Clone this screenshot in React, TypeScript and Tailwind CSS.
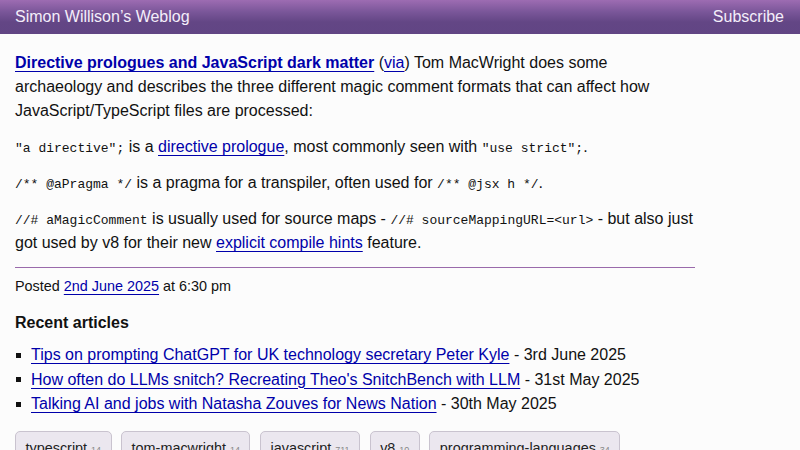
import React from "react";

const mono = "font-['Liberation_Mono',monospace] text-[13px] leading-[1]";
const link = "text-[#0000aa] underline decoration-1 underline-offset-[3px]";

function Code({ children }: { children: React.ReactNode }) {
  return <code className={mono}>{children}</code>;
}

const tags: [string, number][] = [
  ["typescript", 14],
  ["tom-macwright", 14],
  ["javascript", 711],
  ["v8", 10],
  ["programming-languages", 34],
];

export default function App() {
  return (
    <div className="min-h-[450px] w-[800px] overflow-hidden bg-[#fcfcfc] font-['Liberation_Sans',Arial,sans-serif] text-[#111]">
      <header className="flex h-[34px] items-center justify-between bg-[linear-gradient(to_bottom,#9d6cb2_0%,#7a5699_35%,#634685_65%,#614584_100%)] px-[15px] text-[16px] text-[#f4eefa]">
        <span>Simon Willison’s Weblog</span>
        <span className="pr-px">Subscribe</span>
      </header>
      <main className="w-[710px] px-[15px] pt-[17px] text-[16px] leading-[24px]">
        <p className="mb-[12px]">
          <a className={`${link} font-bold`}>Directive prologues and JavaScript dark matter</a> (
          <a className={link}>via</a>) Tom MacWright does some archaeology and describes the three
          different magic comment formats that can affect how JavaScript/TypeScript files are
          processed:
        </p>
        <p className="mb-[12px]">
          <Code>"a directive";</Code> is a <a className={link}>directive prologue</a>, most commonly
          seen with <Code>"use strict";</Code>.
        </p>
        <p className="mb-[12px]">
          <Code>/** @aPragma */</Code> is a pragma for a transpiler, often used for{" "}
          <Code>/** @jsx h */</Code>.
        </p>
        <p className="mb-[12px]">
          <Code>//# aMagicComment</Code> is usually used for source maps -{" "}
          <Code>//# sourceMappingURL=&lt;url&gt;</Code> - but also just got used by v8 for their new{" "}
          <a className={link}>explicit compile hints</a> feature.
        </p>
        <div className="h-0 w-[680px] border-t border-[#9a6aab]" />
        <p className="mt-[6px] text-[14.4px] leading-[24px]">
          Posted <a className={link}>2nd June 2025</a> at 6:30 pm
        </p>
        <h3 className="mt-[13px] font-bold leading-[24px]">Recent articles</h3>
        <ul className="mt-[8px] flex flex-col gap-[0.5px]">
          {[
            ["Tips on prompting ChatGPT for UK technology secretary Peter Kyle", "3rd June 2025"],
            ["How often do LLMs snitch? Recreating Theo's SnitchBench with LLM", "31st May 2025"],
            ["Talking AI and jobs with Natasha Zouves for News Nation", "30th May 2025"],
          ].map(([t, d]) => (
            <li key={t} className="flex items-center">
              <span className="mr-[10px] ml-[1px] inline-block h-[5px] w-[5px] bg-[#111]" />
              <span>
                <a className={link}>{t}</a> - {d}
              </span>
            </li>
          ))}
        </ul>
        <div className="mt-[15px] flex gap-[9.5px] whitespace-nowrap">
          {tags.map(([t, n]) => (
            <span
              key={t}
              className="rounded-[5px] border border-[#c9c3cf] bg-[#ebe7ef] px-[9.5px] pt-[6px] pb-[6px] text-[14.4px] leading-[20px] text-[#222]"
            >
              {t} <span className="text-[9px] text-[#888]">{n}</span>
            </span>
          ))}
        </div>
      </main>
    </div>
  );
}
